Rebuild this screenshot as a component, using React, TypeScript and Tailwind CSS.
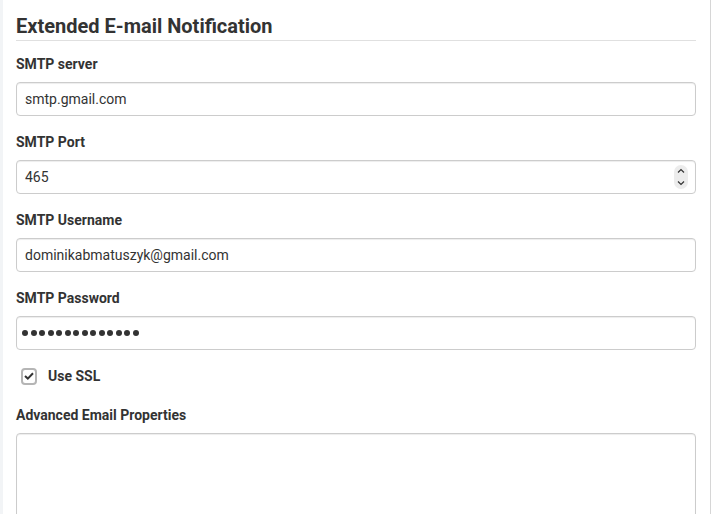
import React from 'react';

const labelCls = 'block text-[14px] leading-5 font-bold text-[#333] mb-2';
const inputCls =
  'block w-full h-[34px] border border-[#ccc] rounded-[4px] px-2 text-[14px] text-[#333] bg-white outline-none shadow-[inset_0_1px_1px_rgba(0,0,0,0.075)]';

const Field: React.FC<{ label: string; children: React.ReactNode }> = ({ label, children }) => (
  <div className="mb-4">
    <label className={labelCls}>{label}</label>
    {children}
  </div>
);

const Spinner = () => (
  <div className="absolute right-[8px] top-1/2 -translate-y-1/2 flex flex-col items-center">
    <span className="w-[14px] h-[12px] rounded-t-full bg-[#ececec] flex items-center justify-center">
      <svg width="8" height="6" viewBox="0 0 8 6" fill="none">
        <path d="M1 4.5 L4 1.5 L7 4.5" stroke="#333" strokeWidth="1.2" />
      </svg>
    </span>
    <span className="w-[14px] h-[12px] rounded-b-full bg-[#ececec] flex items-center justify-center">
      <svg width="8" height="6" viewBox="0 0 8 6" fill="none">
        <path d="M1 1.5 L4 4.5 L7 1.5" stroke="#333" strokeWidth="1.2" />
      </svg>
    </span>
  </div>
);

// masked password field; dots drawn as shapes
const PasswordBox: React.FC<{ length: number }> = ({ length }) => (
  <div className="h-[34px] border border-[#ccc] rounded-[4px] bg-white pl-[5px] flex items-center gap-[2.5px] shadow-[inset_0_1px_1px_rgba(0,0,0,0.075)]">
    {Array.from({ length }).map((_, i) => (
      <span key={i} className="w-[6px] h-[6px] rounded-full bg-[#333]" />
    ))}
  </div>
);

export default function App() {
  return (
    <div
      className="w-[712px] h-[514px] overflow-hidden flex bg-white"
      style={{ fontFamily: 'Roboto, "Liberation Sans", sans-serif' }}
    >
      <div className="w-[3px] bg-[#f2f4f6] shrink-0" />
      <div className="flex-1 pl-[13px] pr-[14px] pt-[13px]">
        <h2 className="text-[20px] leading-[26px] font-bold text-[#333] pb-[1px] border-b border-[#e0e0e0] mb-[13px]">
          Extended E-mail Notification
        </h2>
        <Field label="SMTP server">
          <input className={inputCls} defaultValue="smtp.gmail.com" readOnly />
        </Field>
        <Field label="SMTP Port">
          <div className="relative">
            <input className={inputCls} defaultValue="465" readOnly />
            <Spinner />
          </div>
        </Field>
        <Field label="SMTP Username">
          <input className={inputCls} defaultValue="dominikabmatuszyk@gmail.com" readOnly />
        </Field>
        <Field label="SMTP Password">
          <PasswordBox length={14} />
        </Field>
        <div className="flex items-center gap-[11px] pl-[5px] mb-[19px]">
          <span className="w-[16px] h-[17px] border-2 border-[#b5b5b5] rounded-[4px] bg-white flex items-center justify-center">
            <svg width="10" height="8" viewBox="0 0 10 8" fill="none">
              <path d="M1 4 L3.8 6.6 L9 1.2" stroke="#333" strokeWidth="2" />
            </svg>
          </span>
          <span className="text-[14px] leading-5 font-bold text-[#333]">Use SSL</span>
        </div>
        <label className={labelCls + ' !mb-[8px]'}>Advanced Email Properties</label>
        <textarea
          className="block w-full h-[120px] border border-[#ccc] rounded-[4px] px-2 text-[14px] bg-white outline-none resize-none shadow-[inset_0_1px_1px_rgba(0,0,0,0.075)]"
          readOnly
        />
      </div>
      <div className="w-[1px] bg-[#d6d6d6] shrink-0" />
      <div className="w-[1px] bg-white shrink-0" />
    </div>
  );
}
